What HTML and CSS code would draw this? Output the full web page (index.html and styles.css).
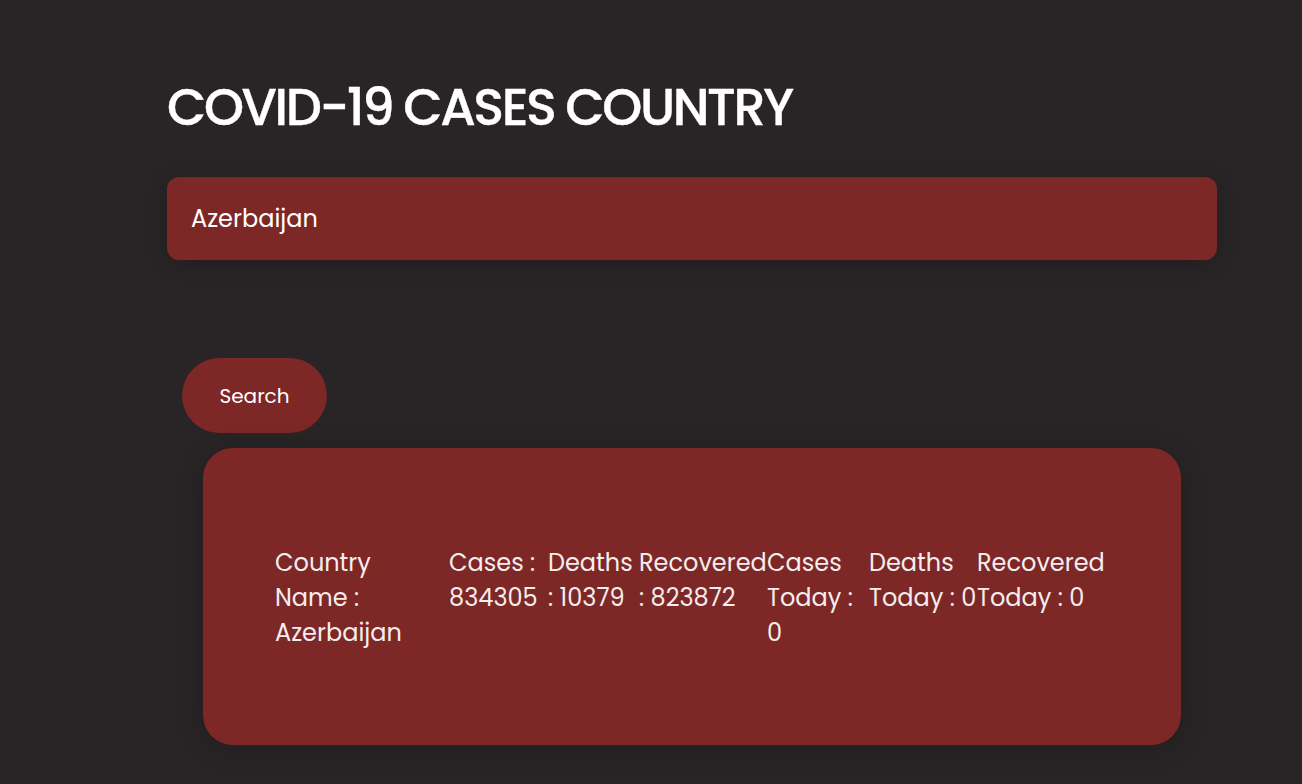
FILE: index.html
```html
<!DOCTYPE html>
<html lang="en">
<head>
<meta charset="utf-8">
<title>COVID-19 Cases Country</title>
<link rel="stylesheet" href="styles.css">
</head>
<body>
<main class="page">
  <h1 class="title">COVID-19 CASES COUNTRY</h1>
  <input class="search-input" type="text" value="Azerbaijan">
  <button class="search-btn" type="button">Search</button>
  <section class="result">
    <div class="stats">
      <div class="stat">Country Name : Azerbaijan</div>
      <div class="stat">Cases : 834305</div>
      <div class="stat">Deaths : 10379</div>
      <div class="stat">Recovered : 823872</div>
      <div class="stat">Cases Today : 0</div>
      <div class="stat">Deaths Today : 0</div>
      <div class="stat">Recovered Today : 0</div>
    </div>
  </section>
</main>
</body>
</html>
```

FILE: styles.css
```css
html, body {
  margin: 0;
  padding: 0;
  background: #292425;
}
body {
  font-family: "Poppins", "Inter", "Noto Sans", sans-serif;
  color: #ffffff;
  min-height: 784px;
}
.page {
  width: 1050px;
  padding: 75px 0 0 167px;
  display: flex;
  flex-direction: column;
  align-items: flex-start;
}
.title {
  margin: 0;
  font-size: 51px;
  line-height: 64px;
  font-weight: 500;
  letter-spacing: -2.4px;
  color: #ffffff;
  -webkit-text-stroke: 0.4px #ffffff;
}
.search-input {
  margin-top: 38px;
  box-sizing: border-box;
  width: 1050px;
  height: 83px;
  padding: 0 24px;
  border: none;
  outline: none;
  border-radius: 12px;
  background: #7e2727;
  color: #ffffff;
  font-family: inherit;
  font-size: 24px;
  box-shadow: 0 4px 24px rgba(0, 0, 0, 0.18);
}
.search-btn {
  margin: 98px 0 0 15px;
  width: 145px;
  height: 75px;
  border: none;
  border-radius: 38px;
  background: #7e2727;
  color: #ffffff;
  font-family: inherit;
  font-size: 20px;
  line-height: 1;
  padding: 0;
  cursor: pointer;
}
.result {
  margin: 15px 0 0 36px;
  box-sizing: border-box;
  width: 978px;
  height: 297px;
  padding: 0 72px;
  border-radius: 30px;
  background: #7e2727;
  box-shadow: 0 4px 30px rgba(0, 0, 0, 0.2);
  display: flex;
  align-items: center;
}
.stats {
  display: grid;
  grid-template-columns: 174px 99px 91px 128px 102px 108px 130px;
  font-size: 24px;
  line-height: 35px;
  color: #f4eeee;
  margin-top: 2px;
}
```
